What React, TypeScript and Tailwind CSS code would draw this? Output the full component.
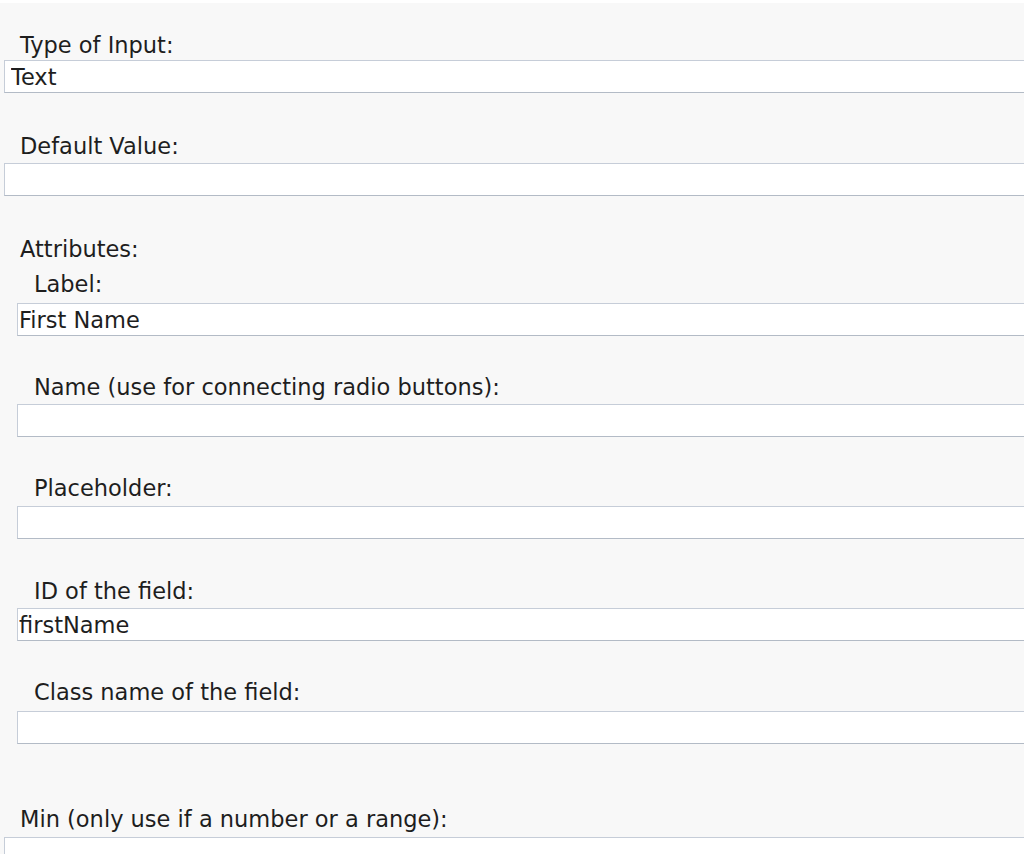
import React from "react";

type Field = {
  label: string;
  value?: string;
  indent?: boolean;
  labelMt: string;
  inputMt: string;
};

const fields: Field[] = [
  { label: "Type of Input:", value: "Text", labelMt: "mt-[29px]", inputMt: "mt-[2px]" },
  { label: "Default Value:", labelMt: "mt-[40px]", inputMt: "mt-[4px]" },
];

const attrs: Field[] = [
  { label: "Label:", value: "First Name", indent: true, labelMt: "mt-[9px]", inputMt: "mt-[6px]" },
  { label: "Name (use for connecting radio buttons):", indent: true, labelMt: "mt-[38px]", inputMt: "mt-[4px]" },
  { label: "Placeholder:", indent: true, labelMt: "mt-[38px]", inputMt: "mt-[5px]" },
  { label: "ID of the field:", value: "firstName", indent: true, labelMt: "mt-[39px]", inputMt: "mt-[4px]" },
  { label: "Class name of the field:", indent: true, labelMt: "mt-[38px]", inputMt: "mt-[6px]" },
];

function Row({ f, first }: { f: Field; first?: boolean }) {
  return (
    <div className="flex flex-col">
      <div className={`${f.labelMt} h-[26px] leading-[26px] ${f.indent ? "pl-[34px]" : "pl-[20px]"}`}>{f.label}</div>
      <input
        readOnly
        defaultValue={f.value ?? ""}
        className={`${f.inputMt} ${f.indent ? "ml-[17px]" : "ml-[4px]"} ${first ? "pl-[6px]" : "pl-[1px]"} w-[1100px] h-[33px] bg-white border border-[#c6cdd8] border-b-[#b3bbc6] outline-none text-[22.5px] text-[#1e1e1e] leading-[26px]`}
        style={{ fontFamily: "'DejaVu Sans', Verdana, sans-serif" }}
      />
    </div>
  );
}

export default function App() {
  return (
    <div
      className="w-[1024px] h-[854px] overflow-hidden bg-[#f8f8f8] text-[22.5px] text-[#1e1e1e]"
      style={{ fontFamily: "'DejaVu Sans', Verdana, sans-serif" }}
    >
      <div className="h-[3px] bg-white" />
      {fields.map((f, i) => (
        <Row key={f.label} f={f} first={i === 0} />
      ))}
      <div className="mt-[40px] h-[26px] leading-[26px] pl-[20px]">Attributes:</div>
      {attrs.map((f) => (
        <Row key={f.label} f={f} />
      ))}
      <Row f={{ label: "Min (only use if a number or a range):", labelMt: "mt-[62px]", inputMt: "mt-[5px]" }} />
    </div>
  );
}
